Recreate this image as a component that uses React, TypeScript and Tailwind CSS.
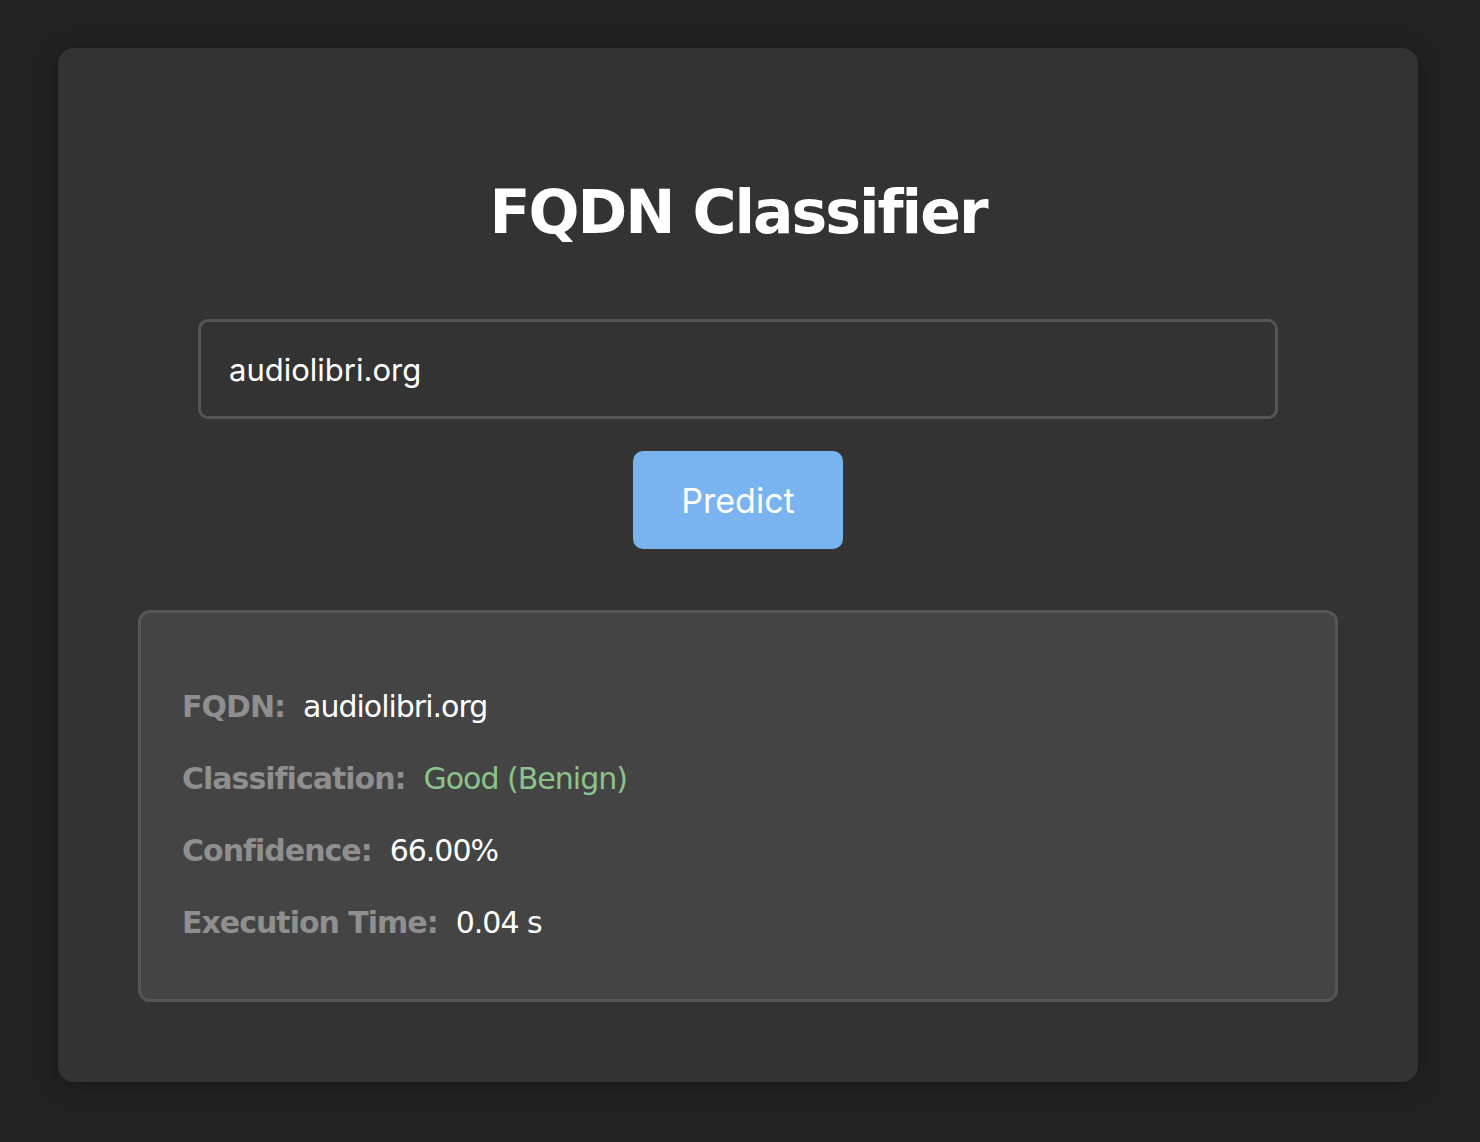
import React from 'react';

// FQDN classifier — dark card with input, predict button and result panel

const ROWS = [
    { label: 'FQDN:', value: 'audiolibri.org', tone: 'text-white' },
    { label: 'Classification:', value: 'Good (Benign)', tone: 'text-[#8bc48b]' },
    { label: 'Confidence:', value: '66.00%', tone: 'text-white' },
    { label: 'Execution Time:', value: '0.04 s', tone: 'text-white' },
];

const App = () => {
    return (
        <div className="min-h-screen bg-[#222222] pt-[48px] px-[58px] pb-[60px]">
            <div className="w-[1360px] rounded-[16px] bg-[#333333] px-[80px] pt-[128px] pb-[80px] shadow-[0_4px_24px_rgba(0,0,0,0.35)]">
                {/* Title */}
                <h1 className="text-center text-white font-bold text-[60px] leading-[72px] tracking-[-2px] font-['DejaVu_Sans',sans-serif]">
                    FQDN Classifier
                </h1>

                {/* Input */}
                <div className="mt-[71px] mx-auto w-[1080px] h-[100px] rounded-[10px] border-[3px] border-[#555555] bg-[#333333] px-[28px] pt-[2px] flex items-center">
                    <span className="text-white text-[31px] font-['Inter',sans-serif]">audiolibri.org</span>
                </div>

                {/* Button */}
                <div className="mt-[32px] flex justify-center">
                    <button className="w-[210px] h-[98px] rounded-[10px] bg-[#79b4f0] text-white text-[34px] font-['Inter',sans-serif]">
                        Predict
                    </button>
                </div>

                {/* Result */}
                <div className="mt-[61px] rounded-[12px] border-[3px] border-[#555555] bg-[#444444] px-[41px] pt-[70px] pb-[52px] flex flex-col gap-[24px]">
                    {ROWS.map((r) => (
                        <div key={r.label} className="flex items-baseline gap-[18px] h-[48px] text-[30px] leading-[48px] font-['DejaVu_Sans',sans-serif] tracking-[-1px]">
                            <span className="font-bold text-[#8f8f8f]">{r.label}</span>
                            <span className={r.tone}>{r.value}</span>
                        </div>
                    ))}
                </div>
            </div>
        </div>
    );
};

export default App;
